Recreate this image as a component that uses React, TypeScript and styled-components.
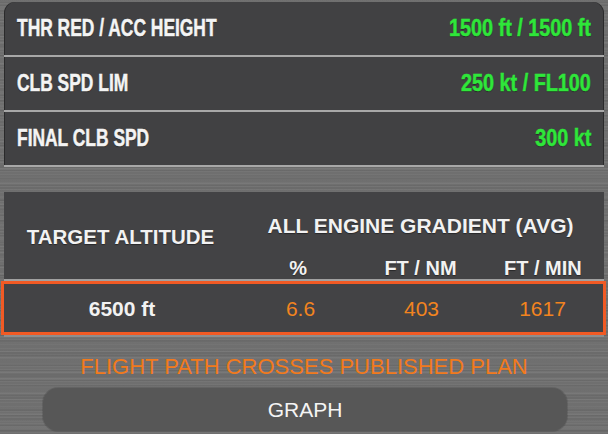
import React from "react";
import styled, { createGlobalStyle } from "styled-components";

const Global = createGlobalStyle`
  html, body { margin: 0; padding: 0; }
  body {
    width: 608px;
    height: 434px;
    overflow: hidden;
    background-color: #6f6f6f;
    background-image:
      repeating-linear-gradient(180deg, rgba(255,255,255,0.04) 0 1px, transparent 1px 3px),
      repeating-linear-gradient(180deg, rgba(0,0,0,0.05) 0 1px, transparent 1px 5px),
      repeating-linear-gradient(180deg, rgba(255,255,255,0.03) 0 2px, transparent 2px 7px),
      repeating-linear-gradient(180deg, rgba(0,0,0,0.04) 0 3px, transparent 3px 11px);
    font-family: "Liberation Sans", Arial, sans-serif;
  }
`;

const Page = styled.div`
  display: flex;
  flex-direction: column;
  padding: 2px 4px 0 4px;
`;

const SettingsPanel = styled.div`
  background: #414143;
  border-radius: 11px 11px 0 0;
  box-shadow: inset 1px 0 0 rgba(0,0,0,0.35), inset -1px 0 0 rgba(0,0,0,0.35);
  display: flex;
  flex-direction: column;
`;

const SettingRow = styled.div`
  height: 53px;
  border-bottom: 2px solid #a8a8a8;
  display: flex;
  align-items: center;
  justify-content: space-between;
  padding: 0 13px 0 13px;
  font-family: "Liberation Sans", Arial, sans-serif;
  font-weight: bold;
  font-size: 23px;
`;

const Condensed = styled.span<{ $right?: boolean; $scale: number }>`
  display: inline-block;
  white-space: nowrap;
  -webkit-text-stroke: 0.5px currentColor;
  text-shadow: 0 1px 1px rgba(0, 0, 0, 0.45);
  transform: scaleX(${(p) => p.$scale});
  transform-origin: ${(p) => (p.$right ? "right" : "left")} center;
`;

const Label = styled(Condensed)`
  color: #f4f4f4;
`;

const Value = styled(Condensed)`
  color: #2fe63a;
`;

const GradientPanel = styled.div`
  margin-top: 25px;
  background: #434345;
  display: flex;
  flex-direction: column;
  border-bottom: 2px solid #8e8e8e;
`;

const HeaderGrid = styled.div`
  display: grid;
  grid-template-columns: 233px 1fr 1fr 1fr;
  grid-template-rows: 56px 31px;
  border-bottom: 2px solid #a0a0a0;
  color: #f2f2f2;
  font-weight: bold;
  text-shadow: 0 1px 1px rgba(0, 0, 0, 0.4);
`;

const AltitudeHead = styled.div`
  grid-row: 1 / span 2;
  display: flex;
  align-items: center;
  justify-content: center;
  font-size: 20.5px;
  padding-top: 2px;
`;

const GroupHead = styled.div`
  grid-column: 2 / span 3;
  display: flex;
  align-items: center;
  justify-content: center;
  font-size: 21px;
  padding-top: 12px;
`;

const SubHead = styled.div`
  display: flex;
  align-items: center;
  justify-content: center;
  font-size: 20px;
  padding-top: 9px;
`;

const ResultRow = styled.div`
  margin: 0 -2px 0 -3px;
  height: 48px;
  border: 3px solid #f15a24;
  display: grid;
  grid-template-columns: 236px 1fr 1fr 1fr;
  align-items: center;
  font-size: 21px;
`;

const Cell = styled.div<{ $accent?: boolean }>`
  text-align: center;
  color: ${(p) => (p.$accent ? "#f2841f" : "#f2f2f2")};
  font-weight: ${(p) => (p.$accent ? "normal" : "bold")};
  padding-top: 1px;
`;

const Warning = styled.div`
  margin-top: 17px;
  text-align: center;
  color: #f27a1c;
  font-size: 22px;
  line-height: 26px;
`;

const GraphButton = styled.button`
  align-self: center;
  margin-top: 8px;
  width: 524px;
  height: 43px;
  margin-left: 2px;
  border: none;
  border-radius: 15px;
  background: #575757;
  box-shadow: 0 0 0 1px rgba(0,0,0,0.12);
  color: #f4f4f4;
  font-family: "Liberation Sans", Arial, sans-serif;
  font-size: 21px;
  padding: 0;
`;

const rows = [
  { label: "THR RED / ACC HEIGHT", value: "1500 ft / 1500 ft" },
  { label: "CLB SPD LIM", value: "250 kt / FL100" },
  { label: "FINAL CLB SPD", value: "300 kt" },
];

export default function App() {
  return (
    <>
      <Global />
      <Page>
        <SettingsPanel>
          {rows.map((r) => (
            <SettingRow key={r.label}>
              <Label $scale={0.757}>{r.label}</Label>
              <Value $right $scale={0.86}>{r.value}</Value>
            </SettingRow>
          ))}
        </SettingsPanel>
        <GradientPanel>
          <HeaderGrid>
            <AltitudeHead>TARGET ALTITUDE</AltitudeHead>
            <GroupHead>ALL ENGINE GRADIENT (AVG)</GroupHead>
            <SubHead>%</SubHead>
            <SubHead>FT / NM</SubHead>
            <SubHead>FT / MIN</SubHead>
          </HeaderGrid>
          <ResultRow>
            <Cell>6500 ft</Cell>
            <Cell $accent>6.6</Cell>
            <Cell $accent>403</Cell>
            <Cell $accent>1617</Cell>
          </ResultRow>
        </GradientPanel>
        <Warning>FLIGHT PATH CROSSES PUBLISHED PLAN</Warning>
        <GraphButton>GRAPH</GraphButton>
      </Page>
    </>
  );
}
